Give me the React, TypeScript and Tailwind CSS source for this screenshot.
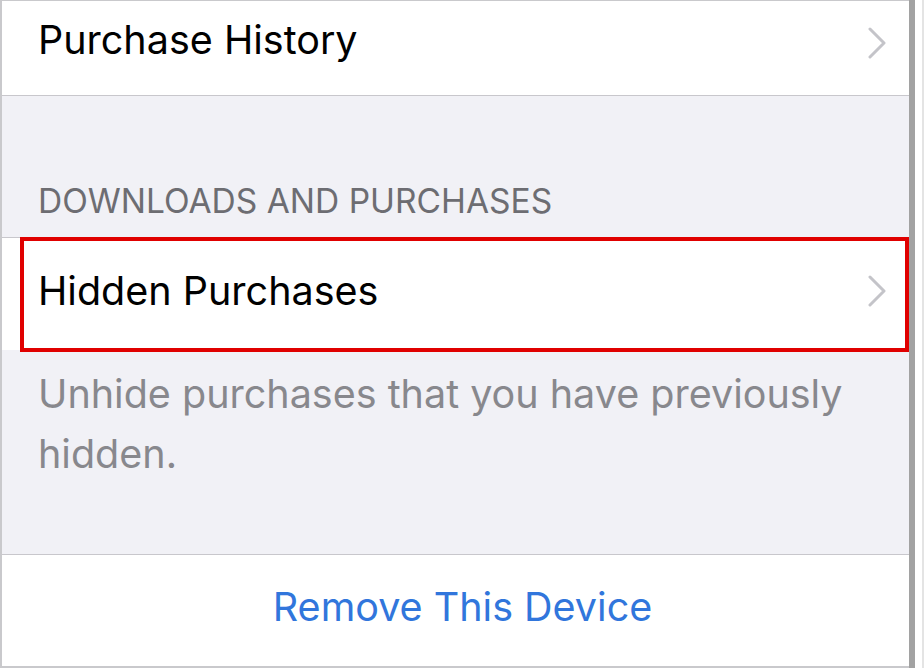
import React from "react";

function Chevron() {
  return (
    <svg width="20" height="32" viewBox="0 0 20 32" className="shrink-0">
      <path d="M2 2 L16 16 L2 30" fill="none" stroke="#c4c4c9" strokeWidth="3" strokeLinecap="round" strokeLinejoin="round" />
    </svg>
  );
}

export default function App() {
  const font = { fontFamily: "Inter, Roboto, 'Liberation Sans', sans-serif" };
  return (
    <div className="w-[924px] h-[668px] flex bg-white overflow-hidden" style={font}>
      <div className="w-[909px] h-[668px] flex flex-col border-l-2 border-t border-b-2 border-[#c9c9cc] bg-[#f1f1f6]">
        <div className="h-[95px] shrink-0 bg-white border-b border-[#c8c7cc] flex items-start justify-between pl-[36px] pr-[21px] pt-[13px]">
          <span className="text-[39.5px] leading-[52px] text-black">Purchase History</span>
          <div className="pt-[13px]"><Chevron /></div>
        </div>
        <div className="h-[141px] shrink-0 flex items-end pl-[36px] pb-[16px]">
          <span className="text-[33.5px] leading-[40px] text-[#6d6d72]">DOWNLOADS AND PURCHASES</span>
        </div>
        <div className="h-[113px] shrink-0 relative bg-white border-t border-[#c8c7cc] flex items-center justify-between pl-[36px] pr-[21px] pb-[6px]">
          <span className="text-[39.5px] leading-[52px] text-black">Hidden Purchases</span>
          <Chevron />
          <div className="absolute left-[18px] top-[-1px] right-0 bottom-[-2px] border-4 border-[#e00000]" />
        </div>
        <div className="h-[204px] shrink-0 pl-[36px] pr-[30px] pt-[14px]">
          <p className="text-[39.5px] leading-[60px] text-[#88888d]">Unhide purchases that you have previously hidden.</p>
        </div>
        <div className="flex-1 bg-white border-t border-[#c8c7cc] flex items-center justify-center pb-[8px] pl-[14px]">
          <span className="text-[39.5px] leading-[52px] text-[#3176dc]">Remove This Device</span>
        </div>
      </div>
      <div className="w-[6px] h-[668px] bg-[#a2a2a2]" />
      <div className="w-[9px] h-[668px] bg-white border-r-2 border-[#e4e4e4]" />
    </div>
  );
}
